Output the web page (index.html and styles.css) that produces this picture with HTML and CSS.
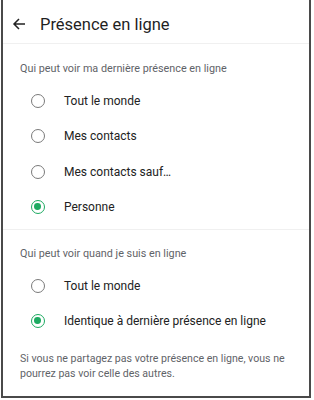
FILE: index.html
```html
<!DOCTYPE html>
<html lang="fr">
<head>
<meta charset="utf-8">
<link rel="stylesheet" href="styles.css">
</head>
<body>
<div class="frame">
  <header class="header">
    <svg class="back" width="14" height="14" viewBox="0 0 14 14"><path d="M13 7H2M7 2L2 7l5 5" fill="none" stroke="#222" stroke-width="1.5"/></svg>
    <h1 class="title">Présence en ligne</h1>
  </header>
  <section class="section">
    <div class="sec-title">Qui peut voir ma dernière présence en ligne</div>
    <div class="row"><span class="radio"></span><span class="label">Tout le monde</span></div>
    <div class="row"><span class="radio"></span><span class="label">Mes contacts</span></div>
    <div class="row"><span class="radio"></span><span class="label">Mes contacts sauf…</span></div>
    <div class="row"><span class="radio on"></span><span class="label">Personne</span></div>
  </section>
  <section class="section second">
    <div class="sec-title">Qui peut voir quand je suis en ligne</div>
    <div class="row"><span class="radio"></span><span class="label">Tout le monde</span></div>
    <div class="row"><span class="radio on"></span><span class="label">Identique à dernière présence en ligne</span></div>
  </section>
  <p class="note">Si vous ne partagez pas votre présence en ligne, vous ne pourrez pas voir celle des autres.</p>
</div>
</body>
</html>
```
FILE: styles.css
```css
html, body { margin: 0; padding: 0; background: #fff; }
body { font-family: Roboto, "Noto Sans", sans-serif; color: #1f1f1f; }
.frame {
  margin-left: 1px;
  width: 306px;
  height: 396px;
  border-left: 2px solid #4a4a4a;
  border-right: 2px solid #4a4a4a;
  border-bottom: 2px solid #4a4a4a;
  display: flex;
  flex-direction: column;
}
.header {
  height: 44px;
  display: flex;
  align-items: center;
  border-bottom: 1px solid #f0f0f0;
  box-sizing: border-box;
  padding: 5px 0 0 9px;
}
.back { margin-right: 14px; }
.title { margin: 0; font-size: 16.5px; font-weight: 400; color: #1f1f1f; }
.section { padding: 17px 0 4px 17px; }
.second { border-top: 1px solid #f0f0f0; padding-top: 16px; }
.sec-title { font-size: 10.8px; color: #5f6368; height: 16px; line-height: 16px; margin-bottom: 6px; }
.row { height: 35.5px; display: flex; align-items: center; }
.radio {
  width: 14px; height: 14px; box-sizing: border-box; border: 1.6px solid #7a7a7a; border-radius: 50%;
  margin-left: 11px; margin-right: 19px; position: relative; flex: none;
}
.radio.on { border-color: #1daa61; }
.radio.on::after {
  content: ""; position: absolute; left: 2px; top: 2px; width: 6.8px; height: 6.8px;
  border-radius: 50%; background: #1daa61;
}
.label { font-size: 12px; color: #222; }
.note { margin: 8px 14px 0 17px; font-size: 10.6px; line-height: 15px; color: #5f6368; }
```
